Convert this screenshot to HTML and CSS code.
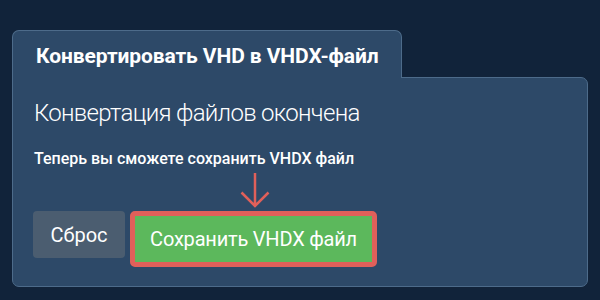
FILE: index.html
```html
<!DOCTYPE html>
<html lang="ru">
<head>
<meta charset="utf-8">
<link rel="stylesheet" href="styles.css">
</head>
<body>
<div class="wrap">
  <div class="tab">Конвертировать VHD в VHDX-файл</div>
  <div class="panel">
    <h2 class="heading">Конвертация файлов окончена</h2>
    <p class="sub">Теперь вы сможете сохранить VHDX файл</p>
    <svg class="arrow" width="30" height="36" viewBox="0 0 30 36" aria-hidden="true">
      <path d="M15 0 V33 M1.5 19.5 L15 33 L28.5 19.5" fill="none" stroke="#e0605a" stroke-width="2.5"/>
    </svg>
    <div class="actions">
      <button class="btn reset">Сброс</button>
      <div class="highlight"><button class="btn save">Сохранить VHDX файл</button></div>
    </div>
  </div>
</div>
</body>
</html>
```

FILE: styles.css
```css
html, body {
  margin: 0;
  padding: 0;
}
body {
  background: #11233a;
  font-family: "Roboto", "Noto Sans", sans-serif;
  color: #ffffff;
  width: 600px;
  height: 300px;
  overflow: hidden;
}
.wrap {
  padding: 30px 12px 0 12px;
}
.tab {
  position: relative;
  z-index: 1;
  box-sizing: border-box;
  width: 390px;
  height: 48px;
  margin-bottom: -1px;
  padding: 13px 0 0 23px;
  background: #2d4968;
  border: 1px solid #4d6b8a;
  border-bottom: none;
  border-radius: 7px 7px 0 0;
  font-size: 21px;
  line-height: 24px;
  font-weight: 700;
  letter-spacing: -0.1px;
  white-space: nowrap;
}
.panel {
  position: relative;
  background: #2d4968;
  border: 1px solid #4d6b8a;
  border-radius: 0 7px 7px 7px;
  padding: 21px 20px 19px 20px;
}
.heading {
  margin: 0 0 0 1px;
  font-size: 24px;
  line-height: 28px;
  font-weight: 300;
  letter-spacing: -0.7px;
  white-space: nowrap;
}
.sub {
  margin: 22px 0 0 1px;
  font-size: 16px;
  line-height: 20px;
  font-weight: 500;
  letter-spacing: 0;
  white-space: nowrap;
}
.arrow {
  position: absolute;
  left: 227px;
  top: 95px;
}
.actions {
  display: flex;
  align-items: flex-start;
  gap: 5px;
  margin-top: 42px;
}
.btn {
  border: none;
  padding: 0;
  font-family: inherit;
  font-size: 20px;
  line-height: 24px;
  font-weight: 400;
  color: #ffffff;
  height: 47px;
  border-radius: 4px;
  white-space: nowrap;
}
.reset {
  width: 92px;
  background: #4b5d70;
}
.highlight {
  border: 5px solid #e0605a;
  border-radius: 5px;
  display: flex;
}
.save {
  width: 237px;
  height: 46px;
  background: #5cb85c;
  border-radius: 0;
  letter-spacing: -0.2px;
}
```
